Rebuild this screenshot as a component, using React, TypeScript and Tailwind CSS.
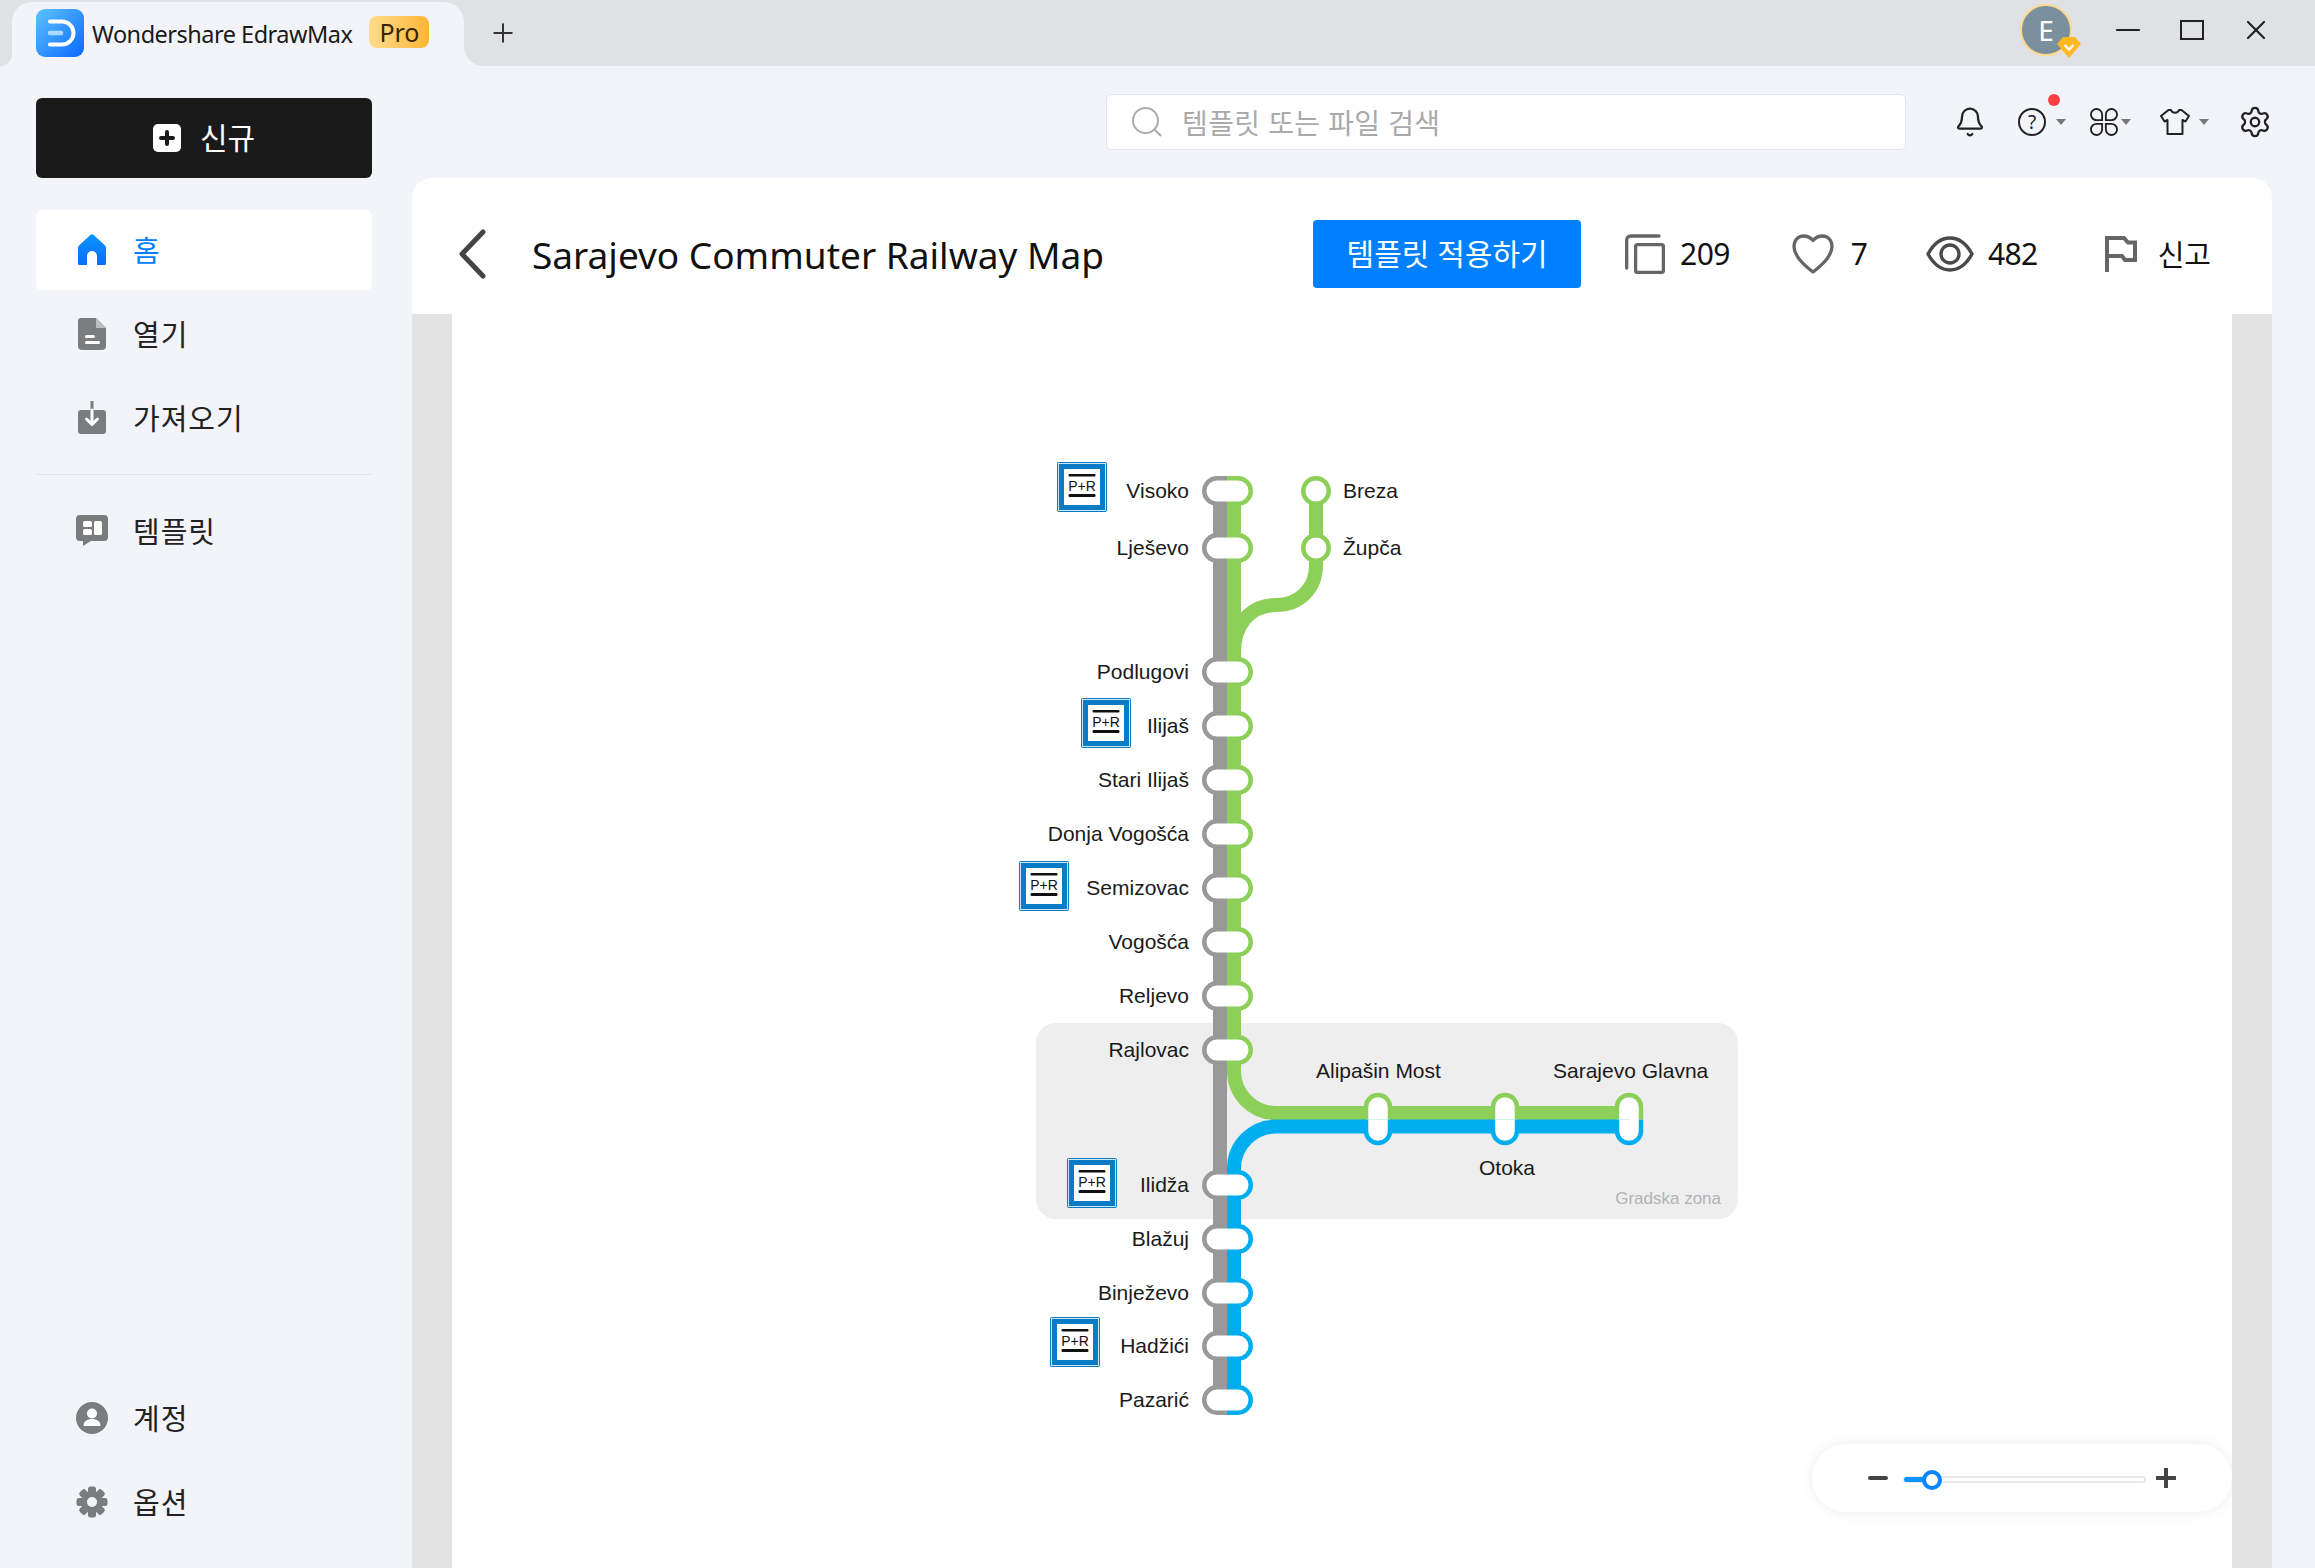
import React from "react";
import { Bell, Settings, Plus, X, Minus } from "lucide-react";

const KO = "font-['Noto_Sans','Noto_Sans_CJK_KR',sans-serif]";

function Logo() {
  return (
    <svg width="48" height="48" viewBox="0 0 48 48" className="shrink-0">
      <defs>
        <linearGradient id="lg" x1="0" y1="0" x2="1" y2="1">
          <stop offset="0" stopColor="#5cc3ff" />
          <stop offset="1" stopColor="#0a69ff" />
        </linearGradient>
      </defs>
      <rect width="48" height="48" rx="9" fill="url(#lg)" />
      <path d="M14 12.5 H26 a11.5 11.5 0 0 1 0 23 H14" fill="none" stroke="#fff" strokeWidth="4" strokeLinecap="round" />
      <path d="M14 24 H25" fill="none" stroke="#a9dcff" strokeWidth="4.5" strokeLinecap="round" />
    </svg>
  );
}

function NavItem({ icon, label, active }: { icon: React.ReactNode; label: string; active?: boolean }) {
  return (
    <div className={`h-20 rounded-[6px] flex items-center pl-[40px] ${active ? "bg-white" : ""}`}>
      <div className="w-[32px] h-[32px] flex items-center justify-center shrink-0">{icon}</div>
      <span className={`ml-[25px] pt-[1px] text-[29px] tracking-[1px] leading-none ${active ? "text-[#0080ff]" : "text-[#222222]"}`}>{label}</span>
    </div>
  );
}

const G = "#7b7c7e";

const HomeIcon = (
  <svg width="30" height="32" viewBox="0 0 30 32">
    <defs>
      <linearGradient id="hm" x1="0" y1="0" x2="0" y2="1">
        <stop offset="0" stopColor="#0a94ff" />
        <stop offset="1" stopColor="#0a6cff" />
      </linearGradient>
    </defs>
    <path d="M13 1.2 a3 3 0 0 1 4 0 L28 11.5 a3 3 0 0 1 1 2.3 V29.5 a1.5 1.5 0 0 1 -1.5 1.5 H20 V22 a5 5 0 0 0 -10 0 V31 H2.5 A1.5 1.5 0 0 1 1 29.5 V13.8 a3 3 0 0 1 1 -2.3 Z" fill="url(#hm)" />
  </svg>
);
const FileIcon = (
  <svg width="28" height="32" viewBox="0 0 28 32">
    <path d="M3 0 H18 L28 10 V28 a4 4 0 0 1 -4 4 H4 a4 4 0 0 1 -4 -4 V3 a3 3 0 0 1 3 -3 Z" fill={G} />
    <path d="M18 0 L28 10 H18 Z" fill="#bdbec0" />
    <rect x="7" y="17" width="10" height="3" rx="1.5" fill="#fff" />
    <rect x="7" y="23" width="15" height="3" rx="1.5" fill="#fff" />
  </svg>
);
const ImportIcon = (
  <svg width="28" height="34" viewBox="0 0 28 34">
    <rect x="0" y="9" width="28" height="24" rx="3" fill={G} />
    <rect x="12.5" y="0" width="3" height="9" fill={G} />
    <path d="M14 9 V23 M8.5 18 L14 23.5 L19.5 18" fill="none" stroke="#fff" strokeWidth="3" strokeLinecap="round" strokeLinejoin="round" />
  </svg>
);
const TemplateIcon = (
  <svg width="32" height="32" viewBox="0 0 32 32">
    <path d="M4 0 H28 a4 4 0 0 1 4 4 V22 a4 4 0 0 1 -4 4 H15 L7 31 V26 H4 a4 4 0 0 1 -4 -4 V4 a4 4 0 0 1 4 -4 Z" fill={G} />
    <rect x="7" y="6" width="9" height="6" rx="1.5" fill="#fff" />
    <rect x="7" y="14" width="9" height="6" rx="1.5" fill="#fff" />
    <rect x="18" y="6" width="8" height="14" rx="1.5" fill="#fff" />
  </svg>
);
const UserIcon = (
  <svg width="32" height="32" viewBox="0 0 32 32">
    <circle cx="16" cy="16" r="16" fill={G} />
    <circle cx="16" cy="11.5" r="5" fill="#fff" />
    <path d="M7.5 24 c0 -5 4 -7 8.5 -7 s8.5 2 8.5 7 Z" fill="#fff" />
  </svg>
);
const GearSolid = (
  <svg width="32" height="32" viewBox="0 0 32 32">
    {[0, 45, 90, 135, 180, 225, 270, 315].map((a) => (
      <rect key={a} x="12" y="0.5" width="8" height="8" rx="2.5" fill={G} transform={`rotate(${a} 16 16)`} />
    ))}
    <circle cx="16" cy="16" r="11" fill={G} />
    <circle cx="16" cy="16" r="5" fill="#f2f4f9" />
  </svg>
);

const Caret = () => <div className="w-0 h-0 border-l-[5px] border-r-[5px] border-t-[6px] border-l-transparent border-r-transparent border-t-[#777777]" />;

function HPill({ y, left, right }: { y: number; left: string; right: string }) {
  return (
    <g fill="#fff" strokeWidth="4.5">
      <path d={`M1227 ${y - 12.75} H1217 a12.75 12.75 0 0 0 0 25.5 H1227 Z`} stroke="none" />
      <path d={`M1227 ${y - 12.75} H1238 a12.75 12.75 0 0 1 0 25.5 H1227 Z`} stroke="none" />
      <path d={`M1227 ${y - 12.75} H1217 a12.75 12.75 0 0 0 0 25.5 H1227`} stroke={left} />
      <path d={`M1227 ${y - 12.75} H1238 a12.75 12.75 0 0 1 0 25.5 H1227`} stroke={right} />
    </g>
  );
}

function VPill({ x }: { x: number }) {
  return (
    <g fill="#fff" strokeWidth="4.5">
      <path d={`M${x - 12} 1119.5 V1107 a12 12 0 0 1 24 0 V1119.5`} stroke="#8cd05a" />
      <path d={`M${x - 12} 1119.5 V1131 a12 12 0 0 0 24 0 V1119.5`} stroke="#00aeef" />
    </g>
  );
}

function PR({ x, y }: { x: number; y: number }) {
  return (
    <g transform={`translate(${x} ${y})`}>
      <rect x="0" y="0" width="50" height="50" rx="2" fill="#0a7cc5" />
      <rect x="1.5" y="1.5" width="47" height="47" fill="none" stroke="#fff" strokeWidth="0.8" />
      <rect x="7" y="7" width="36" height="36" fill="#fff" />
      <rect x="11.5" y="12" width="27" height="2.5" rx="1" fill="#111" />
      <rect x="11.5" y="32" width="27" height="3" rx="1.2" fill="#111" />
      <text x="25" y="29" textAnchor="middle" fontSize="14" fill="#111" fontFamily="'Liberation Sans',sans-serif">P+R</text>
    </g>
  );
}

const left: [string, number][] = [
  ["Visoko", 491], ["Lješevo", 548], ["Podlugovi", 672], ["Ilijaš", 726], ["Stari Ilijaš", 780],
  ["Donja Vogošća", 834], ["Semizovac", 888], ["Vogošća", 942], ["Reljevo", 996], ["Rajlovac", 1050],
  ["Ilidža", 1185], ["Blažuj", 1239], ["Binježevo", 1293], ["Hadžići", 1346], ["Pazarić", 1400],
];

function RailMap() {
  return (
    <svg width="1780" height="1254" viewBox="452 314 1780 1254" className="block" fontFamily="'Liberation Sans',Arial,sans-serif" fontSize="21" fill="#1a1a1a">
      <rect x="1036" y="1023" width="702" height="196" rx="20" fill="#eeeeee" />
      <text x="1721" y="1204" fontSize="17" fill="#b3b3b3" textAnchor="end">Gradska zona</text>
      <rect x="1213" y="491" width="14" height="909" fill="#999999" />
      <g fill="none" strokeWidth="14">
        <path d="M1234 491 V1071 A42 42 0 0 0 1276 1113 H1629" stroke="#8cd05a" />
        <path d="M1316 491 V548 V565 C1316 590 1298 605 1276 605 C1250 605 1234 625 1234 652 V672" stroke="#8cd05a" />
        <path d="M1234 1400 V1168.5 A42 42 0 0 1 1276 1126.5 H1629" stroke="#00aeef" />
      </g>
      {left.map(([n, y]) => (
        <HPill key={n} y={y} left="#999999" right={y < 1100 ? "#8cd05a" : "#00aeef"} />
      ))}
      {left.map(([n, y]) => (
        <text key={n} x="1189" y={y + 7} textAnchor="end">{n}</text>
      ))}
      <circle cx="1316" cy="491" r="12.75" fill="#fff" stroke="#8cd05a" strokeWidth="4.5" />
      <circle cx="1316" cy="548" r="12.75" fill="#fff" stroke="#8cd05a" strokeWidth="4.5" />
      <text x="1343" y="498">Breza</text>
      <text x="1343" y="555">Župča</text>
      <VPill x={1378} />
      <VPill x={1505} />
      <VPill x={1629} />
      <text x="1316" y="1078">Alipašin Most</text>
      <text x="1553" y="1078">Sarajevo Glavna</text>
      <text x="1479" y="1175">Otoka</text>
      <PR x={1057} y={462} />
      <PR x={1081} y={698} />
      <PR x={1019} y={861} />
      <PR x={1067} y={1158} />
      <PR x={1050} y={1317} />
    </svg>
  );
}

export default function App() {
  return (
    <div className={`w-[2315px] h-[1568px] overflow-hidden flex flex-col bg-[#f2f4f9] ${KO}`}>
      {/* title bar */}
      <div className="h-[66px] shrink-0 bg-[#e0e1e5] flex items-start relative">
        <div className="relative ml-[12px] mt-[2px] w-[452px] h-[64px] bg-[#f2f4f9] rounded-t-[20px] flex items-center pl-[24px] pb-[2px]">
          <div className="absolute bottom-0 -left-[12px] w-[12px] h-[12px] bg-[#f2f4f9]"><div className="w-full h-full bg-[#e0e1e5] rounded-br-[12px]" /></div>
          <div className="absolute bottom-0 -right-[20px] w-[20px] h-[20px] bg-[#f2f4f9]"><div className="w-full h-full bg-[#e0e1e5] rounded-bl-[20px]" /></div>
          <Logo />
          <span className="ml-[8px] pt-[3px] text-[23.5px] tracking-[-0.5px] leading-none text-[#1a1a1a] whitespace-nowrap">Wondershare EdrawMax</span>
          <span className="ml-[17px] mb-[2px] w-[60px] h-[32px] rounded-[8px] bg-gradient-to-r from-[#ffdc8a] to-[#ffb52e] text-[#3a2300] text-[25px] leading-none flex items-center justify-center">Pro</span>
        </div>
        <Plus size={30} strokeWidth={1.6} className="ml-[24px] mt-[18px] text-[#333333]" />
        <div className="ml-auto flex items-center h-[60px] relative">
          <div className="relative w-[52px] h-[52px] rounded-full bg-[#7a909e] border-[2px] border-[#fdd98a] flex items-center justify-center text-white text-[28px] leading-none">
            E
            <svg width="24" height="22" viewBox="0 0 24 22" className="absolute -right-[11px] bottom-[-4px]">
              <path d="M6 1 H18 L24 8 L12 22 L0 8 Z" fill="#ffb820" />
              <path d="M7.5 9 L12 13.5 L16.5 9" fill="none" stroke="#fff" strokeWidth="2.4" />
            </svg>
          </div>
          <Minus size={38} strokeWidth={1.3} className="ml-[37px] text-[#222222]" />
          <div className="ml-[33px] w-[24px] h-[20px] border-[2px] border-[#222222]" />
          <X size={32} strokeWidth={1.6} className="ml-[36px] mr-[43px] text-[#222222]" />
        </div>
      </div>

      <div className="flex-1 flex min-h-0">
        {/* sidebar */}
        <aside className="w-[412px] shrink-0 flex flex-col pl-[36px] pr-[40px] pt-[32px] pb-[26px]">
          <div className="h-20 rounded-[6px] bg-[#1a1a1a] flex items-center justify-center text-white">
            <svg width="28" height="28" viewBox="0 0 28 28">
              <rect width="28" height="28" rx="5" fill="#fff" />
              <path d="M14 8 V20 M8 14 H20" stroke="#1a1a1a" strokeWidth="4" strokeLinecap="round" />
            </svg>
            <span className="ml-[19px] text-[30px] leading-none">신규</span>
          </div>
          <div className="mt-[32px] flex flex-col gap-[4px]">
            <NavItem icon={HomeIcon} label="홈" active />
            <NavItem icon={FileIcon} label="열기" />
            <NavItem icon={ImportIcon} label="가져오기" />
          </div>
          <div className="mt-[16px] h-[1px] bg-[#e3e5ea]" />
          <div className="mt-[16px]">
            <NavItem icon={TemplateIcon} label="템플릿" />
          </div>
          <div className="mt-auto flex flex-col gap-[4px]">
            <NavItem icon={UserIcon} label="계정" />
            <NavItem icon={GearSolid} label="옵션" />
          </div>
        </aside>

        {/* main */}
        <main className="w-[1860px] shrink-0 flex flex-col min-h-0">
          <div className="h-[112px] shrink-0 flex items-center relative">
            <div className="ml-[694px] w-[801px] h-[56px] bg-white border border-[#e3e5ea] rounded-[5px] flex items-center pl-[25px]">
              <svg width="30" height="30" viewBox="0 0 30 30" fill="none" stroke="#aaaaaa" strokeWidth="2">
                <circle cx="13.5" cy="13.5" r="12.5" />
                <path d="M22.5 22.5 L29 29" />
              </svg>
              <span className="ml-[20px] pt-[2px] text-[28px] tracking-[0.4px] leading-none text-[#aaaaaa]">템플릿 또는 파일 검색</span>
            </div>
            <Bell size={32} strokeWidth={1.7} className="ml-[48px] text-[#222222]" />
            <div className="relative ml-[32px] w-[28px] h-[28px] rounded-full border-[2px] border-[#222222] flex items-center justify-center text-[19px] leading-none text-[#222222]">
              ?
              <div className="absolute -top-[16px] left-[28px] w-[12px] h-[12px] rounded-full bg-[#ff4040]" />
            </div>
            <div className="ml-[10px]"><Caret /></div>
            <svg width="28" height="28" viewBox="0 0 30 30" className="ml-[24px]" fill="none" stroke="#222222" strokeWidth="2">
              <path d="M13 13 H7 a6 6 0 1 1 6 -6 Z" />
              <path d="M17 13 V7 a6 6 0 1 1 6 6 Z" />
              <path d="M13 17 V23 a6 6 0 1 1 -6 -6 Z" />
              <path d="M17 17 H23 a6 6 0 1 1 -6 6 Z" />
            </svg>
            <div className="ml-[3px]"><Caret /></div>
            <svg width="30" height="26" viewBox="0 0 30 26" className="ml-[29px]" fill="none" stroke="#222222" strokeWidth="2" strokeLinejoin="round">
              <path d="M8.5 1 H11 C12 4.5 18 4.5 19 1 H21.5 L29 7 L25.5 12.5 L22.5 11 V25 H7.5 V11 L4.5 12.5 L1 7 Z" />
            </svg>
            <div className="ml-[9px]"><Caret /></div>
            <Settings size={34} strokeWidth={1.6} className="ml-[29px] text-[#222222]" />
          </div>

          <div className="flex-1 min-h-0 flex flex-col rounded-t-[20px] overflow-hidden">
            <div className="h-[136px] shrink-0 bg-white flex items-center pt-[16px]">
              <svg width="30" height="50" viewBox="0 0 30 50" className="ml-[45px]" fill="none" stroke="#444444" strokeWidth="5" strokeLinecap="round" strokeLinejoin="round">
                <path d="M26 3 L5 25 L26 47" />
              </svg>
              <h1 className="ml-[45px] text-[37px] leading-none font-normal text-[#111111] whitespace-nowrap">Sarajevo Commuter Railway Map</h1>
              <div className="ml-auto flex items-center text-[30px] leading-none text-[#111111] pr-[61px]">
                <button className="w-[268px] h-[68px] rounded-[4px] bg-[#0080ff] text-white text-[30px] leading-none">템플릿 적용하기</button>
                <svg width="40" height="40" viewBox="0 0 40 40" className="ml-[44px]" fill="none" stroke="#666666" strokeWidth="3.3">
                  <rect x="10.6" y="10.6" width="27.8" height="27.8" rx="2" />
                  <path d="M1.7 34 V6 a4 4 0 0 1 4 -4 H34" strokeLinecap="round" />
                </svg>
                <span className="ml-[15px] tracking-[-0.6px]">209</span>
                <svg width="42" height="40" viewBox="0 0 42 40" className="ml-[62px]" fill="none" stroke="#666666" strokeWidth="3.3" strokeLinejoin="round">
                  <path d="M21 6.5 C18 3 15 2 11.5 2 C6 2 2 6.5 2 12.5 C2 20 9 29 21 38 C33 29 40 20 40 12.5 C40 6.5 36 2 30.5 2 C27 2 24 3 21 6.5 Z" />
                </svg>
                <span className="ml-[17px]">7</span>
                <svg width="48" height="36" viewBox="0 0 48 36" className="ml-[58px]" fill="none" stroke="#4a4a4a" strokeWidth="3.4">
                  <path d="M2 18 C8 7 15 2 24 2 S40 7 46 18 C40 29 33 34 24 34 S8 29 2 18 Z" strokeLinejoin="round" />
                  <circle cx="24" cy="18" r="9" />
                </svg>
                <span className="ml-[14px] tracking-[-0.6px]">482</span>
                <svg width="32" height="36" viewBox="0 0 32 36" className="ml-[67px]" fill="none" stroke="#666666" strokeWidth="4">
                  <path d="M2 36 V2 H19 L23 6.5 H30 V24 H20 L17 20 H2" strokeLinejoin="miter" />
                </svg>
                <span className="ml-[21px] text-[29px]">신고</span>
              </div>
            </div>
            <div className="flex-1 min-h-0 bg-[#e3e3e3] px-[40px]">
              <div className="relative h-full bg-white overflow-hidden">
                <RailMap />
                <div className="absolute right-0 bottom-[56px] w-[420px] h-[68px] rounded-full bg-white shadow-[0_0_14px_rgba(0,0,0,0.08)] flex items-center pl-[56px]">
                  <div className="w-[20px] h-[4px] rounded-full bg-[#444444]" />
                  <div className="relative ml-[15px] w-[243px] h-[7px] mt-[3px] rounded-full bg-white border-[2px] border-[#e8e8e8]">
                    <div className="absolute -left-[1px] top-[-1px] w-[29px] h-[5px] rounded-full bg-[#0a94ff]" />
                    <div className="absolute left-[17px] -top-[8px] w-[20px] h-[20px] rounded-full bg-white border-[4px] border-[#0a84ff]" />
                  </div>
                  <svg width="20" height="20" viewBox="0 0 20 20" className="ml-[10px]">
                    <path d="M10 1 V19 M1 10 H19" stroke="#444444" strokeWidth="4" strokeLinecap="round" />
                  </svg>
                </div>
              </div>
            </div>
          </div>
        </main>
      </div>
    </div>
  );
}
